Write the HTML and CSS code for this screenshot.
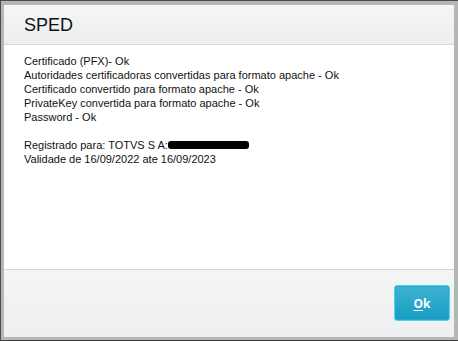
FILE: index.html
```html
<!DOCTYPE html>
<html>
<head>
<meta charset="utf-8">
<link rel="stylesheet" href="styles.css">
</head>
<body>
<div class="window">
  <div class="dialog">
    <div class="header"><span class="title">SPED</span></div>
    <div class="content">
      <div class="line">Certificado (PFX)- Ok</div>
      <div class="line">Autoridades certificadoras convertidas para formato apache - Ok</div>
      <div class="line">Certificado convertido para formato apache - Ok</div>
      <div class="line">PrivateKey convertida para formato apache - Ok</div>
      <div class="line">Password - Ok</div>
      <div class="line blank">&nbsp;</div>
      <div class="line">Registrado para: TOTVS S A:<span class="redact"></span></div>
      <div class="line">Validade de 16/09/2022 ate 16/09/2023</div>
    </div>
    <div class="footer">
      <button class="ok-btn"><span class="u">O</span>k</button>
    </div>
  </div>
</div>
</body>
</html>
```
FILE: styles.css
```css
html, body {
  margin: 0;
  padding: 0;
  background: #b6b6b6;
}
.window {
  width: 458px;
  height: 341px;
  box-sizing: border-box;
  border-top: 1px solid #4c4c4c;
  border-left: 1px solid #4c4c4c;
  border-bottom: 1px solid #3c3c3c;
  padding: 4px 4px 3px 3px;
  background: #b6b6b6;
  display: flex;
}
.dialog {
  flex: 1;
  display: flex;
  flex-direction: column;
  background: #fff;
}
.header {
  box-sizing: border-box;
  border-bottom: 1px solid #d9d9d9;
  height: 40px;
  background: linear-gradient(#f5f6f6, #eceeef);
  display: flex;
  align-items: center;
  padding-left: 20px;
}
.title {
  font-family: "Liberation Sans", Arial, sans-serif;
  font-size: 18px;
  color: #111;
  margin-top: 1px;
}
.content {
  flex: 1;
  padding: 9px 20px 0 20px;
  font-family: "Liberation Sans", Arial, sans-serif;
  font-size: 11px;
  line-height: 14px;
  color: #111;
}
.line {
  white-space: nowrap;
}
.redact {
  display: inline-block;
  width: 81px;
  height: 8px;
  background: #000;
  border-radius: 3px;
  vertical-align: 0px;
}
.footer {
  box-sizing: border-box;
  border-top: 1px solid #d4d4d4;
  height: 68px;
  background: linear-gradient(#f4f5f5, #eeeff0);
  display: flex;
  justify-content: flex-end;
  align-items: flex-start;
  padding: 15px 4px 0 0;
}
.ok-btn {
  width: 56px;
  height: 36px;
  box-sizing: border-box;
  border: 1px solid #52cdef;
  border-radius: 3px;
  background: linear-gradient(#3fb3d3, #159dc1);
  color: #fff;
  font-family: "Open Sans", "DejaVu Sans", sans-serif;
  font-weight: bold;
  font-size: 12px;
  padding: 0;
  box-shadow: inset 0 0 0 1px #2aa9cd;
}
.u {
  text-decoration: underline;
  text-underline-offset: 2px;
}
```
